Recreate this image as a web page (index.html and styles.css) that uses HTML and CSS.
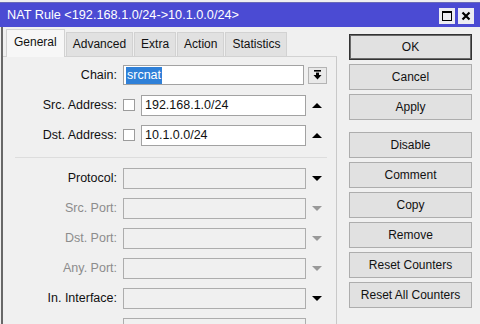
FILE: index.html
```html
<!DOCTYPE html>
<html>

<head>
    <meta charset="utf-8">
    <link rel="stylesheet" href="styles.css">
</head>

<body>

    <div class="titlebar">
        <span class="title">NAT Rule &lt;192.168.1.0/24-&gt;10.1.0.0/24&gt;</span>
        <span class="tb_btn">
            <svg width="16" height="16" viewBox="0 0 16 16">
                <rect x="3.5" y="3.5" width="9" height="9" fill="none" stroke="#000" stroke-width="1" />
                <rect x="3" y="3" width="10" height="2" fill="#000" />
            </svg>
        </span>
        <span class="tb_btn">
            <svg width="16" height="16" viewBox="0 0 16 16">
                <path d="M4.5 4.5 L11.5 11.5 M11.5 4.5 L4.5 11.5" stroke="#000" stroke-width="2.2" />
            </svg>
        </span>
    </div>

    <div class="window">
        <div class="left">
            <ul class="tabs">
                <li class="active">General</li>
                <li>Advanced</li>
                <li>Extra</li>
                <li>Action</li>
                <li>Statistics</li>
            </ul>

            <div class="panel">
                <div class="row">
                    <span class="label">Chain:</span>
                    <div class="field white chain"><span class="selected">srcnat</span></div>
                    <span class="side">
                        <span class="dropdown">
                            <svg width="9" height="10" viewBox="0 0 9 10">
                                <rect x="1" y="0" width="7" height="1.6" fill="#000" />
                                <rect x="3" y="2.6" width="3" height="2.6" fill="#000" />
                                <polygon points="0.5,5 8.5,5 4.5,9.5" fill="#000" />
                            </svg>
                        </span>
                    </span>
                </div>
                <div class="row">
                    <span class="label">Src. Address:</span>
                    <span class="check"></span>
                    <div class="field white">192.168.1.0/24</div>
                    <span class="side"><span class="tri_up"></span></span>
                </div>
                <div class="row">
                    <span class="label">Dst. Address:</span>
                    <span class="check"></span>
                    <div class="field white">10.1.0.0/24</div>
                    <span class="side"><span class="tri_up"></span></span>
                </div>

                <div class="separator"></div>

                <div class="row">
                    <span class="label">Protocol:</span>
                    <div class="field"></div>
                    <span class="side"><span class="tri_down"></span></span>
                </div>
                <div class="row">
                    <span class="label gray">Src. Port:</span>
                    <div class="field"></div>
                    <span class="side"><span class="tri_down gray"></span></span>
                </div>
                <div class="row">
                    <span class="label gray">Dst. Port:</span>
                    <div class="field"></div>
                    <span class="side"><span class="tri_down gray"></span></span>
                </div>
                <div class="row">
                    <span class="label gray">Any. Port:</span>
                    <div class="field"></div>
                    <span class="side"><span class="tri_down gray"></span></span>
                </div>
                <div class="row">
                    <span class="label">In. Interface:</span>
                    <div class="field"></div>
                    <span class="side"><span class="tri_down"></span></span>
                </div>
                <div class="row">
                    <span class="label"></span>
                    <div class="field"></div>
                    <span class="side"></span>
                </div>
            </div>
        </div>

        <div class="buttons">
            <div class="btn default">OK</div>
            <div class="btn">Cancel</div>
            <div class="btn">Apply</div>
            <div class="btn group">Disable</div>
            <div class="btn">Comment</div>
            <div class="btn">Copy</div>
            <div class="btn">Remove</div>
            <div class="btn">Reset Counters</div>
            <div class="btn">Reset All Counters</div>
        </div>
    </div>

</body>

</html>
```

FILE: styles.css
```css
body {
    margin: 0;
    height: 324px;
    overflow: hidden;
    background-color: #f0f0f0;
    font-family: "Liberation Sans", Arial, sans-serif;
    font-size: 12px;
    color: #111;
}

.titlebar {
    display: flex;
    align-items: center;
    margin-top: 2px;
    height: 24px;
    border-top: 1px solid #6a6ab8;
    background-color: #4b4bd3;
    padding: 0 6px 0 7px;
}

.title {
    flex: 1;
    color: white;
    font-size: 12.7px;
    line-height: 24px;
}

.tb_btn {
    width: 16px;
    height: 16px;
    margin-left: 3px;
    margin-top: 2px;
    background-color: #ececf2;
}

.tb_btn svg {
    display: block;
}

.window {
    display: flex;
    margin-left: 1px;
    border-left: 2px solid #686868;
    height: 297px;
    overflow: hidden;
}

.left {
    width: 334px;
}

.tabs {
    list-style-type: none;
    margin: 0;
    padding: 0 0 0 3px;
    height: 29px;
    display: flex;
    align-items: flex-end;
}

.tabs li {
    height: 23px;
    line-height: 23px;
    padding: 0 6px;
    margin-right: 1px;
    background-color: #e1e1e1;
    border: 1px solid #d2d2d2;
    border-bottom: none;
}

.tabs li.active {
    height: 27px;
    line-height: 25px;
    padding: 0 7px;
    margin-bottom: -1px;
    background-color: #f7f7f7;
    position: relative;
}

.panel {
    border-top: 1px solid #d2d2d2;
    border-right: 1px solid #c9c9c9;
    padding: 3px 8px 0 0;
    height: 264px;
    overflow: hidden;
}

.row {
    display: flex;
    align-items: center;
    height: 30px;
    font-size: 12.5px;
}

.label {
    width: 114px;
    margin-right: 6px;
    text-align: right;
    color: #111;
}

.label.gray {
    color: #8c8c8c;
}

.field {
    flex: 1;
    height: 21px;
    box-sizing: border-box;
    border: 1px solid #adadad;
    background-color: #f0f0f0;
    padding-left: 3px;
    line-height: 19px;
}

.field.white {
    background-color: white;
    border-color: #a2a2a2;
}

.field.chain {
    margin-right: 2px;
    height: 20px;
    line-height: 18px;
    padding-left: 2px;
}

.selected {
    background-color: #2f80d8;
    color: white;
    padding: 1px 1px 2px 1px;
}

.check {
    width: 12px;
    height: 12px;
    box-sizing: border-box;
    border: 1px solid #9c9c9c;
    background-color: white;
    margin-right: 6px;
}

.side {
    width: 22px;
    display: flex;
    justify-content: center;
}

.dropdown {
    width: 19px;
    height: 17px;
    box-sizing: border-box;
    border: 1px solid #b4b4b4;
    background-color: #e9e9e9;
    display: flex;
    align-items: center;
    justify-content: center;
}

.dropdown svg {
    display: block;
}

.tri_up {
    width: 0;
    height: 0;
    border-left: 5px solid transparent;
    border-right: 5px solid transparent;
    border-bottom: 5px solid #000;
}

.tri_down {
    width: 0;
    height: 0;
    border-left: 5px solid transparent;
    border-right: 5px solid transparent;
    border-top: 5px solid #000;
}

.tri_down.gray {
    border-top-color: #999;
}

.separator {
    height: 1px;
    background-color: #dddddd;
    margin: 7px 1px 5px 12px;
}

.buttons {
    margin-left: 12px;
    width: 123px;
    padding-top: 7px;
}

.btn {
    height: 26px;
    box-sizing: border-box;
    margin-bottom: 4px;
    border: 1px solid #adadad;
    background-color: #e1e1e1;
    text-align: center;
    line-height: 24px;
    color: #111;
}

.btn.default {
    border-color: #333;
    box-shadow: inset 0 0 0 1px #6a6a6a;
}

.btn.group {
    margin-top: 12px;
}
```
